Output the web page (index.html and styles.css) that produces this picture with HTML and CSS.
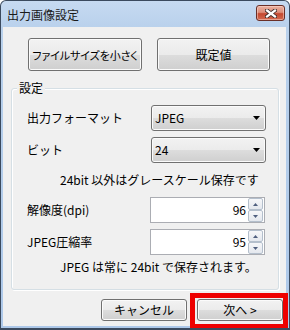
FILE: index.html
```html
<!DOCTYPE html>
<html lang="ja">
<head>
<meta charset="utf-8">
<title>出力画像設定</title>
<link rel="stylesheet" href="styles.css">
</head>
<body>
<div class="window">
  <div class="titlebar">
    <span class="title">出力画像設定</span>
    <div class="close">
      <svg width="12" height="9" viewBox="0 0 12 9">
        <path d="M2 1.5 L10 7.5 M10 1.5 L2 7.5" stroke="#3a2a28" stroke-width="4" stroke-linecap="square" fill="none"/>
        <path d="M2 1.5 L10 7.5 M10 1.5 L2 7.5" stroke="#ffffff" stroke-width="2.2" stroke-linecap="square" fill="none"/>
      </svg>
    </div>
  </div>
  <div class="client">
    <div class="top-buttons">
      <div class="btn btn-small"><span class="narrow">ファイルサイズを小さく</span></div>
      <div class="btn btn-default">既定値</div>
    </div>
    <div class="group">
      <span class="legend">設定</span>
      <div class="row">
        <span class="label">出力フォーマット</span>
        <div class="combo"><span>JPEG</span><svg class="arrow" width="7" height="4" viewBox="0 0 7 4"><polygon points="0,0 7,0 3.5,4" fill="#000"/></svg></div>
      </div>
      <div class="row row-second">
        <span class="label">ビット</span>
        <div class="combo"><span>24</span><svg class="arrow" width="7" height="4" viewBox="0 0 7 4"><polygon points="0,0 7,0 3.5,4" fill="#000"/></svg></div>
      </div>
      <p class="note note-first">24bit 以外はグレースケール保存です</p>
      <div class="row">
        <span class="label">解像度(dpi)</span>
        <div class="spin"><span class="value">96</span><div class="spin-btns"><div class="sb"><svg width="5" height="3" viewBox="0 0 5 3"><polygon points="2.5,0 5,3 0,3" fill="#4f5f7f"/></svg></div><div class="sb"><svg width="5" height="3" viewBox="0 0 5 3"><polygon points="0,0 5,0 2.5,3" fill="#4f5f7f"/></svg></div></div></div>
      </div>
      <div class="row row-second">
        <span class="label">JPEG圧縮率</span>
        <div class="spin"><span class="value">95</span><div class="spin-btns"><div class="sb"><svg width="5" height="3" viewBox="0 0 5 3"><polygon points="2.5,0 5,3 0,3" fill="#4f5f7f"/></svg></div><div class="sb"><svg width="5" height="3" viewBox="0 0 5 3"><polygon points="0,0 5,0 2.5,3" fill="#4f5f7f"/></svg></div></div></div>
      </div>
      <p class="note note-last">JPEG は常に 24bit で保存されます。</p>
    </div>
    <div class="bottom-buttons">
      <div class="btn btn-foot">キャンセル</div>
      <div class="btn btn-foot">次へ &gt;</div>
    </div>
  </div>
  <div class="highlight"></div>
</div>
</body>
</html>
```
FILE: styles.css
```css
* { box-sizing: border-box; }
html, body { margin: 0; padding: 0; background: #ffffff; }
body {
  font-family: "Noto Sans CJK JP", "Noto Sans", sans-serif;
  font-size: 12px;
  line-height: 14px;
  color: #000;
}
.window {
  position: relative;
  width: 290px;
  height: 330px;
  border: 1px solid #3b4a5e;
  border-bottom-width: 2px;
  border-radius: 6px 6px 0 0;
  background: linear-gradient(#c6daf1 0px, #b9d1ec 26px, #adc8e9 100%);
  display: flex;
  flex-direction: column;
  padding: 0 3px 2px 2px;
  overflow: hidden;
}
.titlebar {
  height: 26px;
  display: flex;
  align-items: flex-start;
  flex: none;
}
.title {
  margin: 7px 0 0 4px;
  color: #1a1a1a;
}
.close {
  margin: 4px 1px 0 auto;
  width: 29px;
  height: 16px;
  border: 1px solid #6a2f27;
  border-radius: 3px;
  background: linear-gradient(#eab1a1 0%, #dd8e7a 45%, #c4482f 55%, #d36a50 100%);
  box-shadow: inset 0 0 0 1px rgba(255,220,210,0.5);
  display: flex;
  align-items: center;
  justify-content: center;
}
.client {
  flex: 1;
  background: #f0f0f0;
  display: flex;
  flex-direction: column;
}
.top-buttons {
  display: flex;
  gap: 15px;
  margin: 11px 0 0 25px;
}
.btn {
  height: 33px;
  border: 1px solid #707070;
  border-radius: 3px;
  background: linear-gradient(#f2f2f2 0%, #ebebeb 50%, #dddddd 50%, #cfcfcf 100%);
  box-shadow: inset 0 0 0 1px #fbfbfb;
  display: flex;
  align-items: center;
  justify-content: center;
  white-space: nowrap;
}
.btn-small { width: 114px; }
.btn-default { width: 113px; }
.narrow {
  font-feature-settings: "palt";
  font-size: 11px;
  letter-spacing: -0.1px;
}
.group {
  position: relative;
  margin: 17px 0 0 8px;
  width: 268px;
  border: 1px solid #d5dfe5;
  border-radius: 3px;
  box-shadow: inset 1px 1px 0 #ffffff, 1px 1px 0 #ffffff;
  padding: 16px 0 15px 15px;
}
.legend {
  position: absolute;
  top: -8px;
  left: 5px;
  padding: 0 2px;
  background: #f0f0f0;
}
.row {
  display: grid;
  grid-template-columns: 123px 116px;
  align-items: center;
  height: 26px;
}
.row-second { margin-top: 6px; }
.combo {
  margin-left: 1px;
  height: 26px;
  border: 1px solid #707070;
  border-radius: 3px;
  background: linear-gradient(#f2f2f2 0%, #ebebeb 50%, #dddddd 50%, #cfcfcf 100%);
  box-shadow: inset 0 0 0 1px #fbfbfb;
  display: flex;
  align-items: center;
  padding: 0 5px 0 3px;
}
.combo .arrow { margin-left: auto; }
.note {
  margin: 10px 0 10px 33px;
  white-space: nowrap;
}
.note.note-last { margin: 5px 0 0 33px; }
.spin {
  width: 115px;
  height: 26px;
  border: 1px solid #abadb3;
  background: #ffffff;
  display: flex;
  align-items: center;
  justify-content: flex-end;
  padding: 0 1px 0 0;
}
.value { margin-right: 2px; }
.spin-btns {
  display: flex;
  flex-direction: column;
  width: 15px;
  height: 24px;
}
.sb {
  flex: 1;
  border: 1px solid #b4bfcc;
  border-radius: 2px;
  background: linear-gradient(#f6f7f9, #e4e8ee);
  display: flex;
  align-items: center;
  justify-content: center;
}
.bottom-buttons {
  display: flex;
  justify-content: flex-end;
  gap: 10px;
  margin: 9px 3px 0 0;
}
.btn-foot {
  width: 86px;
  height: 22px;
}
.highlight {
  position: absolute;
  left: 189px;
  top: 292px;
  width: 98px;
  height: 36px;
  border: 5px solid #ee0000;
}
```
